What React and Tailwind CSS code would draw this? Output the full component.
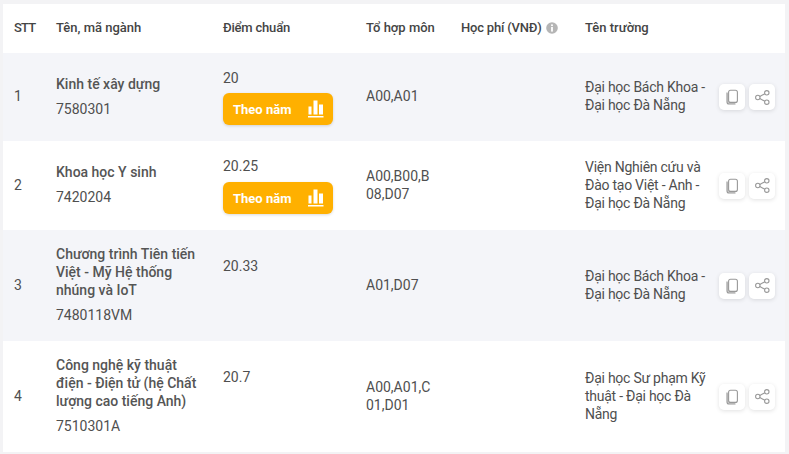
import { useState } from 'react'

const rows = [
  { id: 1, name: 'Kinh tế xây dựng', code: '7580301', score: '20', chart: 'mt-[6px]', combo: 'A00,A01', school: 'Đại học Bách Khoa - Đại học Đà Nẵng', h: 'h-[88px]', shade: true },
  { id: 2, name: 'Khoa học Y sinh', code: '7420204', score: '20.25', chart: 'mt-[7px]', combo: 'A00,B00,B08,D07', school: 'Viện Nghiên cứu và Đào tạo Việt - Anh - Đại học Đà Nẵng', h: 'h-[89px]', shade: false },
  { id: 3, name: 'Chương trình Tiên tiến Việt - Mỹ Hệ thống nhúng và IoT', code: '7480118VM', score: '20.33', combo: 'A01,D07', school: 'Đại học Bách Khoa - Đại học Đà Nẵng', h: 'h-[111px]', shade: true },
  { id: 4, name: 'Công nghệ kỹ thuật điện - Điện tử (hệ Chất lượng cao tiếng Anh)', code: '7510301A', score: '20.7', combo: 'A00,A01,C01,D01', school: 'Đại học Sư phạm Kỹ thuật - Đại học Đà Nẵng', h: 'h-[111px]', shade: false },
]

const gridCols = 'grid grid-cols-[53px_167px_143px_95px_124px_134px_66px]'

function ChartIcon() {
  return (
    <svg width="16" height="18" viewBox="0 0 16 18" fill="white">
      <rect x="0.5" y="6.5" width="3" height="8" />
      <rect x="5.5" y="0.5" width="4" height="14" />
      <rect x="11" y="4.5" width="4" height="10" />
      <rect x="0" y="16" width="15.5" height="1.5" />
    </svg>
  )
}

function CopyIcon() {
  return (
    <svg width="16" height="16" viewBox="0 0 16 16" fill="none" stroke="#999" strokeWidth="1.1">
      <path d="M3 3.5 V13 a2 2 0 0 0 2 2 h6.5" fill="#d4d4d4" />
      <rect x="4.6" y="1.2" width="8.8" height="12.2" rx="2" fill="white" />
    </svg>
  )
}

function ShareIcon() {
  return (
    <svg width="15" height="15" viewBox="0 0 15 15" fill="none" stroke="#999" strokeWidth="1.1">
      <circle cx="2.8" cy="7.5" r="2.2" />
      <circle cx="11.8" cy="2.8" r="2.2" />
      <circle cx="11.8" cy="12.2" r="2.2" />
      <path d="M4.8 6.5 L9.8 3.8 M4.8 8.5 L9.8 11.2" />
    </svg>
  )
}

function InfoIcon() {
  return (
    <svg width="12" height="12" viewBox="0 0 12 12">
      <circle cx="6" cy="6" r="5.8" fill="#b5b5b5" />
      <rect x="5.1" y="2.4" width="1.8" height="1.7" fill="white" />
      <rect x="5.1" y="5" width="1.8" height="4.6" fill="white" />
    </svg>
  )
}

function ActionButton({ children }) {
  return (
    <button className="w-[26px] h-[26px] flex items-center justify-center bg-white rounded-[5px] shadow-[0_1px_4px_rgba(0,0,0,0.12)]">
      {children}
    </button>
  )
}

export default function App() {
  const [list] = useState(rows)

  return (
    <div className="w-[789px] h-[454px] bg-[#f3f3f5] pt-1 pl-[3px] font-['Roboto',Arial,sans-serif] text-[14px] leading-[18px] text-[#4f4f4f] overflow-hidden">
      <div className="w-[782px] h-[448px] bg-white">
        {/* header sits 1px above the row centre */}
        <div className={`${gridCols} h-[49px] pb-[2px] items-center font-medium text-[13px] text-[#444]`}>
          <div className="pl-[11px] tracking-[-0.8px]">STT</div>
          <div>Tên, mã ngành</div>
          <div className="tracking-[-0.2px]">Điểm chuẩn</div>
          <div>Tổ hợp môn</div>
          <div className="flex items-center gap-1 tracking-[-0.2px]">
            Học phí (VNĐ)
            <InfoIcon />
          </div>
          <div>Tên trường</div>
          <div />
        </div>
        {list.map((r) => (
          <div key={r.id} className={`${gridCols} ${r.h} pb-[2px] items-center ${r.shade ? 'bg-[#f4f5f9]' : 'bg-white'}`}>
            <div className="pl-[11px]">{r.id}</div>
            <div className="pr-5">
              <div className="font-medium text-[#555]">{r.name}</div>
              <div className="mt-[7px]">{r.code}</div>
            </div>
            <div className={`self-start ${r.chart ? 'pt-4' : 'pt-[27px]'}`}>
              <div>{r.score}</div>
              {r.chart && (
                <button className={`${r.chart} w-[110px] h-8 rounded-[6px] bg-[#ffb000] flex items-center justify-between pl-[10px] pr-[9px] text-white font-bold text-[13px] shadow-[0_1px_3px_rgba(0,0,0,0.15)]`}>
                  <span className="pt-[1px]">Theo năm</span>
                  <ChartIcon />
                </button>
              )}
            </div>
            <div className="pr-6 break-all">{r.combo}</div>
            <div />
            <div className="pr-1 tracking-[-0.25px]">{r.school}</div>
            <div className="flex gap-[4px] mt-[2px]">
              <ActionButton><CopyIcon /></ActionButton>
              <ActionButton><ShareIcon /></ActionButton>
            </div>
          </div>
        ))}
      </div>
    </div>
  )
}
